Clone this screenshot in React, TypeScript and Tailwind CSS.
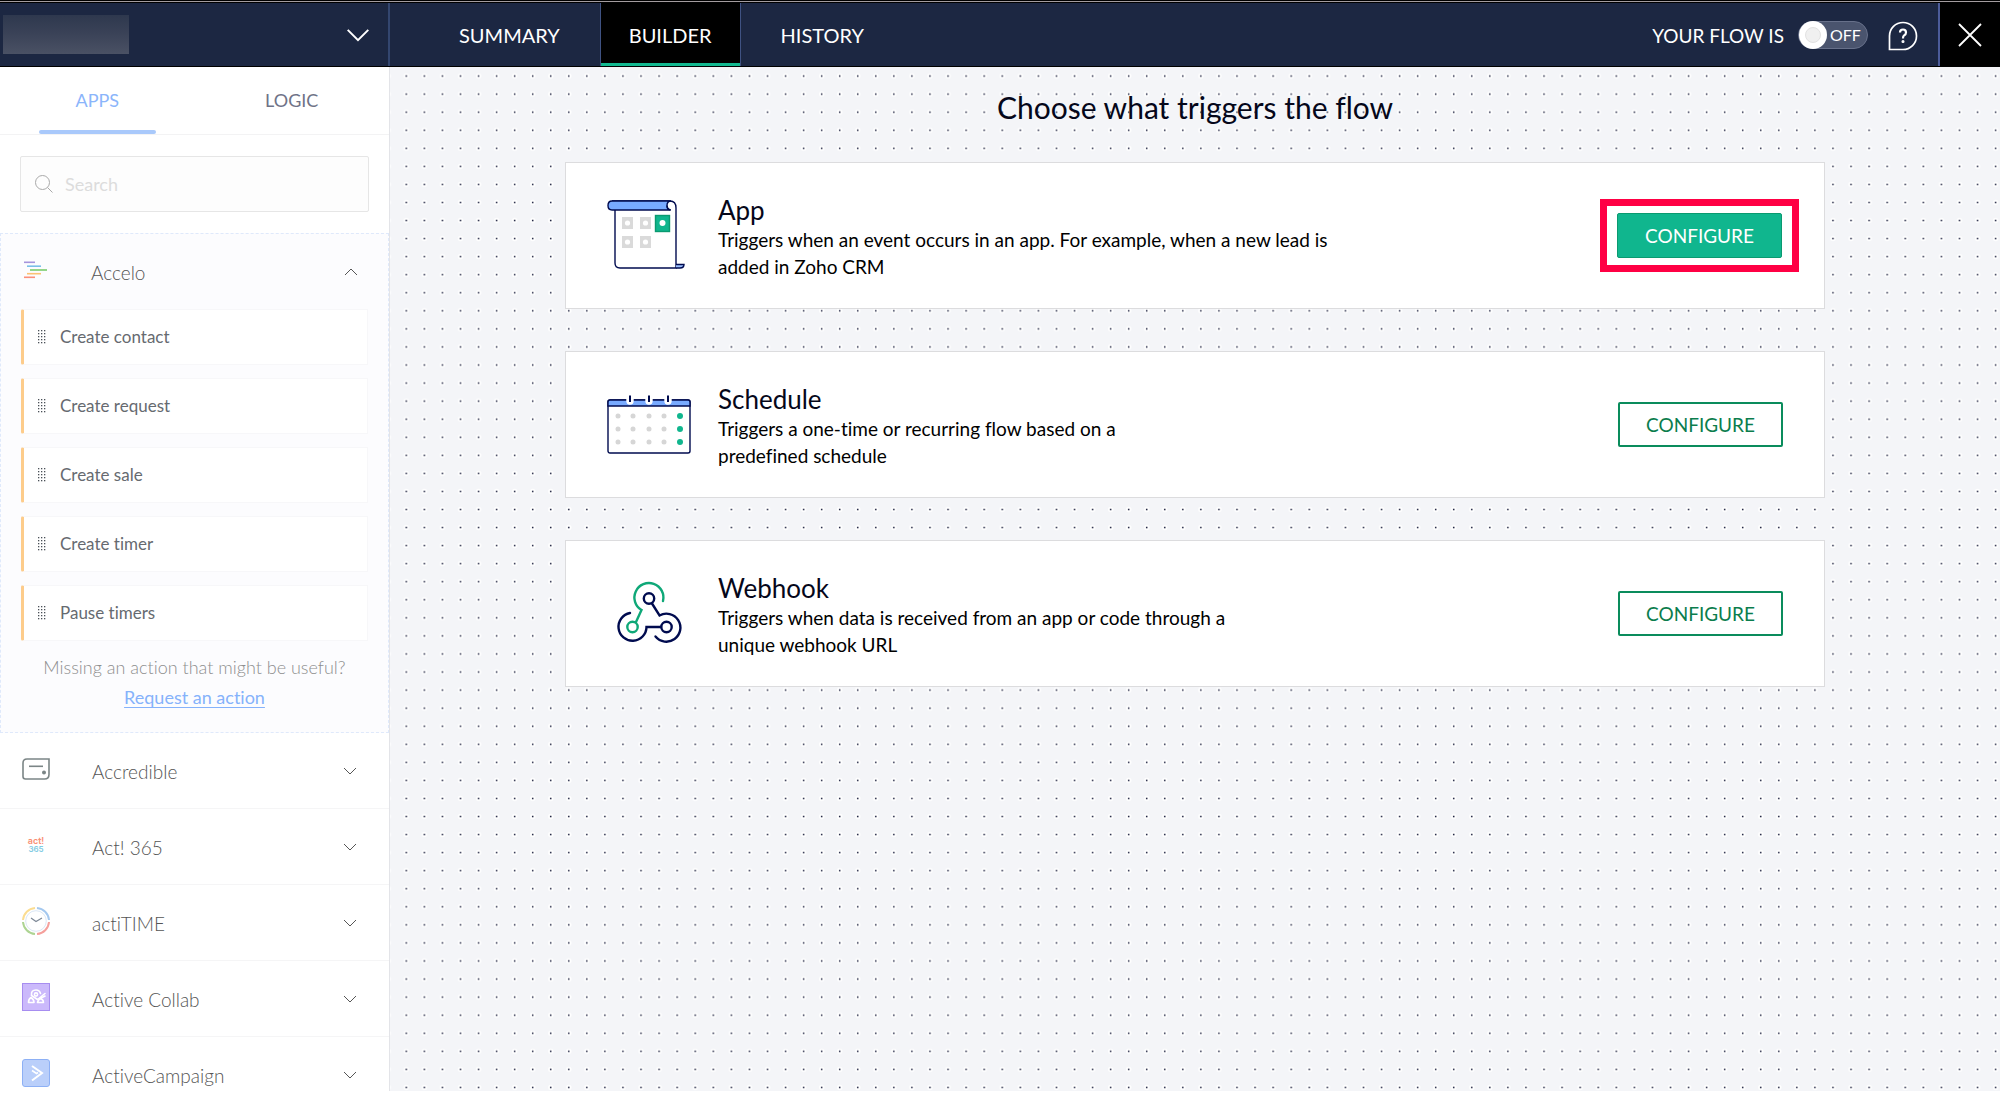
import type { ReactNode } from "react";

const NAVY = "#000b4f";
const GREEN = "#10b68e";

function Chevron({ className, up = false }: { className: string; up?: boolean }) {
  return (
    <svg viewBox="0 0 14 8" className={className} fill="none" stroke="currentColor" aria-hidden="true">
      <path d={up ? "M1 7L7 1L13 7" : "M1 1L7 7L13 1"} vectorEffect="non-scaling-stroke" />
    </svg>
  );
}

function AcceloIcon() {
  return (
    <svg viewBox="0 0 28 28" className="size-7" aria-hidden="true" strokeWidth="1.6">
      <path d="M3 6.3h11" stroke="#a594dc" />
      <path d="M6 10.2h14" stroke="#79bfe8" />
      <path d="M9 14h17" stroke="#79cc6c" />
      <path d="M6 17.7h14" stroke="#fbc273" />
      <path d="M3 21.3h11" stroke="#fb8f78" />
    </svg>
  );
}

function AccredibleIcon() {
  return (
    <svg viewBox="0 0 28 28" className="size-7" fill="none" stroke="#7b8586" strokeWidth="1.6" aria-hidden="true">
      <path d="M5 4H27V19.5Q27 24 22.5 24H3.5Q1 24 1 21.5V8Q1 4 5 4Z" />
      <path d="M7 11.3h14" />
      <circle cx="22" cy="17.4" r="1.2" fill="#7b8586" />
    </svg>
  );
}

function ActIcon() {
  return (
    <svg viewBox="0 0 28 28" className="size-7" fontFamily="Inter, sans-serif" fontWeight="600" textAnchor="middle" aria-hidden="true">
      <text x="14" y="13" fontSize="9" fill="#f98f74">act!</text>
      <text x="14" y="21" fontSize="8" fill="#7fcbe3">365</text>
    </svg>
  );
}

function ActiTimeIcon() {
  return (
    <svg viewBox="0 0 28 28" className="size-7" fill="none" strokeWidth="2" aria-hidden="true">
      <path d="M1 13A13 13 0 0 1 13 1" stroke="#fbdd92" />
      <path d="M15 1A13 13 0 0 1 27 13" stroke="#a4c8ef" />
      <path d="M27 15A13 13 0 0 1 15 27" stroke="#f5a09c" />
      <path d="M13 27A13 13 0 0 1 1 15" stroke="#add493" />
      <circle cx="14" cy="14" r="10.3" stroke="#dce8f6" strokeWidth="1" />
      <path d="M9 11L14 14.5L20 11" stroke="#7d8896" strokeWidth="1.2" />
    </svg>
  );
}

function ActiveCollabIcon() {
  return (
    <svg viewBox="0 0 28 28" className="size-7" fill="none" aria-hidden="true">
      <rect x="0.5" y="0.5" width="27" height="27" fill="#cbb9fb" stroke="#a78df0" />
      <g stroke="#fff" strokeWidth="1.6" strokeLinecap="round" strokeLinejoin="round">
        <path d="M9.5 12Q9 7 14 7Q17.5 7 18.5 10.5" />
        <circle cx="14" cy="11.500" r="1.600" />
        <path d="M9.500 12.500L15.500 16.500L23 10.500" />
        <path d="M18 15.500L23 13" />
        <path d="M9 14.500Q6.500 16 6.500 19.500H12Q12 16.500 9 14.500Z" />
        <path d="M19 15.500Q16 16.500 15.500 19.500H21.500Q21.500 17 19 15.500Z" />
      </g>
    </svg>
  );
}

function ActiveCampaignIcon() {
  return (
    <svg viewBox="0 0 28 28" className="size-7" fill="none" aria-hidden="true">
      <rect x="0.5" y="0.5" width="27" height="27" rx="2.5" fill="#bacffa" stroke="#8db0f5" />
      <path d="M10 7L20 14L10 21.500" stroke="#fff" strokeWidth="2" />
      <path d="M10 11.500L14.500 14.500L16 13.500" stroke="#fff" strokeWidth="1.6" />
    </svg>
  );
}

function AppArt() {
  return (
    <svg viewBox="0 0 84 84" className="size-[84px]" fill="none" stroke={NAVY} strokeWidth="1.4" aria-hidden="true">
      <path d="M8 14V69Q8 74 13 74H69V14Q69 7 63 7H5" fill="#fff" />
      <path d="M63 7H5Q1 7 1 11.500Q1 16 5 16H63Q60 15 60 11.500Q60 7 64 7Z" fill="#78aaff" />
      <path d="M60 11.500Q60 16 64 16" />
      <path d="M69 70.500H77Q77 74 73 74H69" fill="#9cc0ff" />
      {[[15, 23], [33, 23], [15, 42], [33, 42]].map(([x, y]) => (
        <g key={`${x}-${y}`} stroke="none">
          <rect x={x} y={y} width="11" height="12" fill="#dadada" />
          <circle cx={x + 5.5} cy={y + 6} r="2.600" fill="#fff" />
        </g>
      ))}
      <rect x="48.500" y="21.500" width="14" height="16" fill={GREEN} stroke="#0a9a70" />
      <circle cx="55.500" cy="29" r="3" fill="#fff" stroke="none" />
    </svg>
  );
}

function ScheduleArt() {
  return (
    <svg viewBox="0 0 84 84" className="size-[84px]" fill="none" stroke={NAVY} strokeWidth="1.4" aria-hidden="true">
      <rect x="1" y="17" width="82" height="53" rx="2" fill="#fff" />
      <path d="M1 23V19Q1 17 3 17H81Q83 17 83 19V23Z" fill="#78aaff" />
      {[23, 42, 61].map((x) => (
        <g key={x}>
          <path d={`M${x - 3} 16V18Q${x - 3} 21 ${x} 21Q${x + 3} 21 ${x + 3} 18V16`} fill="#fff" stroke="#fff" />
          <path d={`M${x} 12.500V19`} strokeWidth="2" />
        </g>
      ))}
      {[33, 46, 59].map((y) =>
        [11, 26, 42, 57, 73].map((x) => (
          <circle key={`${x}-${y}`} cx={x} cy={y} r={x === 73 ? 3 : 2.5} fill={x === 73 ? GREEN : "#d6d6d6"} stroke="none" />
        )),
      )}
    </svg>
  );
}

function WebhookArt() {
  return (
    <svg viewBox="0 0 84 84" className="size-[84px]" fill="none" stroke={NAVY} strokeWidth="2.400" strokeLinecap="round" aria-hidden="true">
      <g stroke="#0fa878">
        <path d="M56 29A14.500 14.500 0 1 0 34.500 38L29 50" />
        <circle cx="25.500" cy="55" r="5.200" />
      </g>
      <circle cx="42" cy="26.500" r="5.200" />
      <path d="M45 31.500L52.500 43.500A14 14 0 1 1 48.500 64.500" />
      <circle cx="59.500" cy="55" r="5.200" />
      <path d="M54 55H39.500A14 14 0 1 1 23 41" />
    </svg>
  );
}

function Grip() {
  return (
    <svg viewBox="0 0 8 14" className="h-3.5 w-2" fill="#4a5057" aria-hidden="true">
      {[0, 3, 6].map((x) => [0, 3, 6, 9, 12].map((y) => <rect key={`${x}-${y}`} x={x} y={y} width="1.300" height="1.300" />))}
    </svg>
  );
}

function DotGrid() {
  return (
    <svg className="absolute inset-0 size-full" aria-hidden="true">
      <defs>
        <pattern id="dots" width="18.060" height="18.060" patternUnits="userSpaceOnUse" x="7" y="0">
          <circle cx="9.300" cy="9" r="2.600" fill="#fff" />
          <rect x="8.500" y="8.300" width="1.500" height="1.500" fill="#1e2240" />
        </pattern>
      </defs>
      <rect width="100%" height="100%" fill="url(#dots)" />
    </svg>
  );
}

const actions = ["Create contact", "Create request", "Create sale", "Create timer", "Pause timers"];

const apps: { name: string; icon: ReactNode }[] = [
  { name: "Accredible", icon: <AccredibleIcon /> },
  { name: "Act! 365", icon: <ActIcon /> },
  { name: "actiTIME", icon: <ActiTimeIcon /> },
  { name: "Active Collab", icon: <ActiveCollabIcon /> },
  { name: "ActiveCampaign", icon: <ActiveCampaignIcon /> },
];

const triggers: { title: string; lines: [string, string]; art: ReactNode; active?: boolean }[] = [
  {
    title: "App",
    lines: ["Triggers when an event occurs in an app. For example, when a new lead is", "added in Zoho CRM"],
    art: <AppArt />,
    active: true,
  },
  {
    title: "Schedule",
    lines: ["Triggers a one-time or recurring flow based on a", "predefined schedule"],
    art: <ScheduleArt />,
  },
  {
    title: "Webhook",
    lines: ["Triggers when data is received from an app or code through a", "unique webhook URL"],
    art: <WebhookArt />,
  },
];

function Header() {
  return (
    <header className="shrink-0 border-t border-black">
      <div className="border-t border-[#a39c9f]">
        <div className="flex h-[65px] border-y border-black bg-[#1c2742] text-xl text-white">
          <div className="flex w-[390px] items-center justify-between border-r-2 border-[#33466f] pr-[18px] pl-[3px]">
            <div className="h-[39px] w-[126px] bg-linear-to-b from-[#2e384e] via-[#3b4358] to-[#4a5164]" />
            <button type="button" aria-label="Flow menu">
              <Chevron className="h-3.5 w-6 stroke-2" />
            </button>
          </div>
          <nav className="flex pl-[29px]">
            <button type="button" className="border-r border-[#3f5282] px-10">SUMMARY</button>
            <button type="button" className="border-y-3 border-t-black border-b-[#12b990] bg-black px-7">BUILDER</button>
            <button type="button" className="border-l border-[#3f5282] px-10">HISTORY</button>
          </nav>
          <div className="ml-auto flex items-center">
            <span id="flow-state" className="pt-1 text-[19px]">YOUR FLOW IS</span>
            <button
              type="button"
              role="switch"
              aria-checked="false"
              aria-labelledby="flow-state"
              className="ml-3.5 flex h-7 w-[70px] items-center rounded-full border border-[#67708a] bg-[#4a546e] text-base"
            >
              <span className="mr-[3px] flex size-7 items-center justify-center rounded-full bg-white">
                <span className="size-4 rounded-full border border-[#e2e2e2] bg-[#f0f0f0]" />
              </span>
              OFF
            </button>
            <button type="button" aria-label="Help" className="ml-5 pt-0.5">
              <svg viewBox="0 0 30 30" className="size-[30px]" fill="none" stroke="#fff" strokeWidth="1.700" aria-hidden="true">
                <path d="M1.500 28.500V15A13.500 13.500 0 1 1 15 28.500Z" />
                <path d="M12 11.500Q12 8.500 15 8.500Q18 8.500 18 11.500Q18 13.500 16 14.500Q15 15 15 17.500" strokeWidth="2.200" />
                <circle cx="15" cy="20.500" r="0.700" />
              </svg>
            </button>
            <button type="button" aria-label="Close" className="ml-5 flex h-full w-[62px] items-center justify-center border-l-2 border-[#4c5c9a] bg-black">
              <svg viewBox="0 0 24 24" className="size-6" stroke="#fff" strokeWidth="1.800" aria-hidden="true">
                <path d="M1 1L23 23M23 1L1 23" />
              </svg>
            </button>
          </div>
        </div>
      </div>
    </header>
  );
}

function Sidebar() {
  return (
    <aside className="flex w-[390px] shrink-0 flex-col overflow-hidden border-r border-[#e3e4e8] bg-white text-lg">
      <div className="grid h-[68px] shrink-0 grid-cols-2 border-b border-[#f3f3f4]" role="tablist">
        <div className="flex justify-center">
          <button type="button" role="tab" aria-selected="true" className="relative w-[117px] pb-0.5 text-[#8bb5fb]">
            APPS
            <span className="absolute inset-x-0 bottom-0 h-1 rounded-full bg-[#a9c9fb]" />
          </button>
        </div>
        <button type="button" role="tab" aria-selected="false" className="pb-0.5 text-[#6f7387]">LOGIC</button>
      </div>
      <label className="mx-5 mt-[21px] flex h-14 shrink-0 items-center gap-3 rounded-xs border border-[#e6e6e6] bg-[#fdfdfd] pl-3.5">
        <svg viewBox="0 0 18 18" className="size-[18px] shrink-0" fill="none" stroke="#a9a9a9" aria-hidden="true">
          <circle cx="7.500" cy="7.500" r="7" />
          <path d="M12.500 12.500L17.500 17.500" />
        </svg>
        <input type="search" aria-label="Search apps" placeholder="Search" className="w-full bg-transparent outline-none placeholder:text-[#dcdcdc]" />
      </label>

      <section className="mt-[21px] shrink-0 border border-dashed border-[#dfe9fb] bg-[#fcfcfe] px-5 pb-5">
        <button type="button" aria-expanded="true" className="flex h-[75px] w-full items-center text-[19px] font-light text-[#555]">
          <span className="pb-1"><AcceloIcon /></span>
          <span className="ml-[42px] flex-1 pt-0.5 text-left">Accelo</span>
          <Chevron up className="mr-2.5 h-2 w-3.5" />
        </button>
        <ul className="flex flex-col gap-[13px]">
          {actions.map((name) => (
            <li key={name} className="flex h-14 items-center gap-3.5 rounded-l-xs border-y border-r border-l-3 border-[#f7f7f9] border-l-[#fdcc8b] bg-white pl-3.5 text-[17px] text-[#666a70]">
              <Grip />
              {name}
            </li>
          ))}
        </ul>
        <div className="pt-[11px] text-center leading-[30px]">
          <p className="font-light text-[#8e8e8e]">Missing an action that might be useful?</p>
          <a href="#request" className="text-[#85b2fb] underline underline-offset-3">Request an action</a>
        </div>
      </section>

      {apps.map((app) => (
        <button key={app.name} type="button" aria-expanded="false" className="flex h-[76px] w-full shrink-0 items-center border-b border-[#f5f5f6] px-[22px] text-[19px] font-light text-[#555]">
          <span className="pb-1">{app.icon}</span>
          <span className="ml-[42px] flex-1 pt-0.5 text-left">{app.name}</span>
          <Chevron className="mr-2.5 h-2 w-3.5" />
        </button>
      ))}
    </aside>
  );
}

function ConfigureButton({ active }: { active?: boolean }) {
  if (active) {
    return (
      <div className="-mr-4 border-7 border-[#ff0044] p-[7px] px-2.5">
        <button type="button" className="h-[45px] w-[165px] rounded-xs border border-[#0a9a70] bg-[#10b68e] pt-0.5 text-[19px] text-white">CONFIGURE</button>
      </div>
    );
  }
  return (
    <button type="button" className="h-[45px] w-[165px] rounded-xs border-2 border-[#0a8c5c] bg-white pt-0.5 text-[19px] text-[#0b7d4d]">CONFIGURE</button>
  );
}

export default function App() {
  return (
    <div className="flex h-screen flex-col bg-white pb-2 font-[Lato,sans-serif] [font-variant-ligatures:none]">
      <Header />
      <div className="flex min-h-0 flex-1">
        <Sidebar />
        <main className="relative min-w-0 flex-1 overflow-hidden bg-[#f4f5f8]">
          <DotGrid />
          <div className="relative px-[175px]">
            <h1 className="flex h-[95px] items-center justify-center pb-3.5 text-[30px] text-[#05071a]">
              Choose what triggers the flow
            </h1>
            <div className="flex flex-col gap-[42px]">
              {triggers.map((t) => (
                <section key={t.title} className="flex h-[147px] items-center border border-[#dcdcde] bg-white px-[41px]">
                  {t.art}
                  <div className="ml-[27px] flex-1 pt-[3px]">
                    <h2 className="text-[26px] leading-8 text-[#05071a]">{t.title}</h2>
                    <p className="text-[19px] leading-[27px] text-black">
                      {t.lines[0]}
                      <br />
                      {t.lines[1]}
                    </p>
                  </div>
                  <ConfigureButton active={t.active} />
                </section>
              ))}
            </div>
          </div>
        </main>
      </div>
    </div>
  );
}
